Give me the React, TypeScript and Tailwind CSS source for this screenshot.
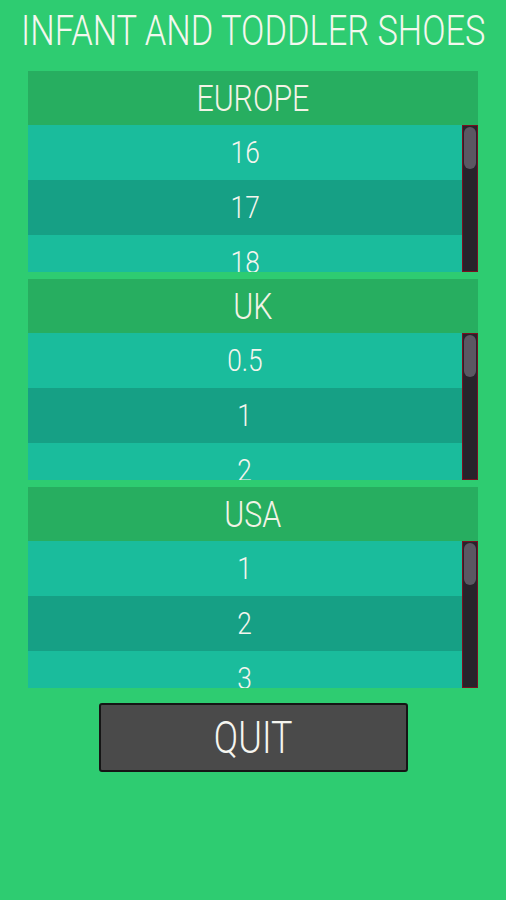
import React from "react";

const font = { fontFamily: "Roboto, 'Liberation Sans', sans-serif" };

function Section({ title, items }: { title: string; items: string[] }) {
  return (
    <div className="flex flex-col w-[450px] h-[201px]">
      <div className="h-[54px] bg-[#27ae60] flex items-center justify-center">
        <span className="inline-block text-[37px] font-light text-[#f3f3e6] scale-x-[0.82] leading-none">
          {title}
        </span>
      </div>
      <div className="flex flex-1 overflow-hidden">
        <div className="flex-1 overflow-hidden">
          {items.map((it, i) => (
            <div
              key={i}
              className={`h-[55px] flex items-center justify-center ${i % 2 === 0 ? "bg-[#1abc9c]" : "bg-[#16a085]"}`}
            >
              <span className="inline-block text-[31px] font-light text-[#f5f5ee] scale-x-[0.85] leading-none">
                {it}
              </span>
            </div>
          ))}
        </div>
        <div className="w-[16px] bg-[#27232b] border border-[#7a1020] p-[1px] flex flex-col">
          <div className="h-[42px] w-full rounded-full bg-[#5b5762]" />
        </div>
      </div>
    </div>
  );
}

export default function App() {
  return (
    <div className="w-[506px] h-[900px] bg-[#2ecc71] flex flex-col items-center" style={font}>
      <div className="w-full h-[60px] overflow-hidden flex items-center justify-center">
        <span className="inline-block shrink-0 text-[43px] font-light text-[#f4f7ee] scale-x-[0.8] whitespace-nowrap leading-none">
          INFANT AND TODDLER SHOES
        </span>
      </div>
      <div className="mt-[11px] flex flex-col gap-[7px] items-center">
        <Section title="EUROPE" items={["16", "17", "18"]} />
        <Section title="UK" items={["0.5", "1", "2"]} />
        <Section title="USA" items={["1", "2", "3"]} />
      </div>
      <button className="mt-[15px] w-[309px] h-[69px] bg-[#4a4a4a] border-2 border-[#151515] rounded-[3px] flex items-center justify-center">
        <span className="inline-block text-[45px] font-light text-[#f5f5f0] scale-x-[0.8] leading-none">
          QUIT
        </span>
      </button>
    </div>
  );
}
